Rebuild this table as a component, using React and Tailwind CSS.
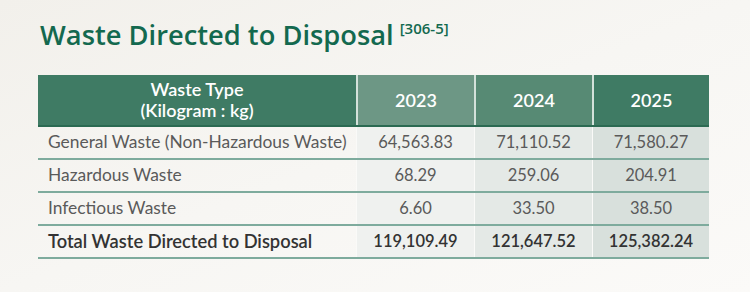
import React from 'react';

const rows = [
    { name: 'General Waste (Non-Hazardous Waste)', values: ['64,563.83', '71,110.52', '71,580.27'] },
    { name: 'Hazardous Waste', values: ['68.29', '259.06', '204.91'] },
    { name: 'Infectious Waste', values: ['6.60', '33.50', '38.50'] },
];

const total = { name: 'Total Waste Directed to Disposal', values: ['119,109.49', '121,647.52', '125,382.24'] };

const yearHead = ['bg-[#6d9785]', 'bg-[#578a74]', 'bg-[#3f7b64]'];
const yearBody = ['bg-[#eff1ef]', 'bg-[#e4e9e6]', 'bg-[#d8e0dc]'];

const Row = ({ row, bold }) => (
    <div className="grid grid-cols-[318px_118px_118px_117px] border-b-2 border-[#7eab9d]">
        <div className={`h-[31px] flex items-center pl-[10px] ${bold ? 'text-[#333333] font-semibold text-[18.3px]' : 'text-[#5a5a5a] text-[17.4px]'}`}>
            {row.name}
        </div>
        {row.values.map((v, i) => (
            <div
                key={i}
                className={`h-[31px] flex items-center justify-center border-l border-[#fafaf8] ${yearBody[i]} ${bold ? 'text-[#333333] font-semibold' : 'text-[#5a5a5a]'}`}
            >
                {v}
            </div>
        ))}
    </div>
);

const App = () => {
    return (
        <div className="w-[750px] h-[292px] bg-gradient-to-br from-[#f2f0eb] via-[#f7f6f3] to-[#fbfaf8] font-['Lato',sans-serif] overflow-hidden">
            <div className="pt-[16px] pl-[40px] flex items-start">
                <h1 className="text-[27.3px] leading-[37px] font-semibold text-[#13694f] font-['Open_Sans',sans-serif]">
                    Waste Directed to Disposal
                </h1>
                <span className="ml-[6px] mt-[1px] text-[15px] font-semibold text-[#13694f] font-['Open_Sans',sans-serif]">[306-5]</span>
            </div>

            <div className="mt-[22px] ml-[38px] w-[671px] text-[16.5px]">
                <div className="grid grid-cols-[318px_118px_118px_117px] border-b-2 border-[#2b6a52] text-white">
                    <div className="h-[50px] bg-[#3f7b64] flex flex-col items-center justify-center leading-[21px] font-semibold text-[18px]">
                        <span>Waste Type</span>
                        <span>(Kilogram : kg)</span>
                    </div>
                    {['2023', '2024', '2025'].map((y, i) => (
                        <div
                            key={y}
                            className={`h-[50px] flex items-center justify-center border-l-2 border-[#d3e1da] text-[18px] font-semibold ${yearHead[i]}`}
                        >
                            {y}
                        </div>
                    ))}
                </div>
                {rows.map((r) => (
                    <Row key={r.name} row={r} />
                ))}
                <Row row={total} bold />
            </div>
        </div>
    );
};

export default App;
